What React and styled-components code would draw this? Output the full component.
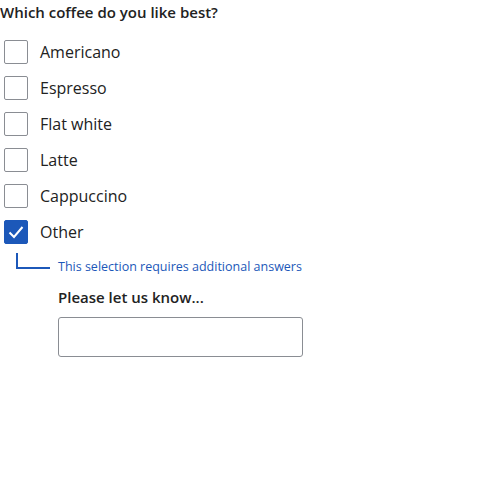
import styled, { createGlobalStyle } from "styled-components";

const Global = createGlobalStyle`
  body {
    margin: 0;
    background: #fff;
    font-family: "Open Sans", "Noto Sans", sans-serif;
    color: #1d1d1f;
  }
`;

const Group = styled.div`
  display: flex;
  flex-direction: column;
`;

const Question = styled.div`
  margin-top: 2px;
  font-size: 15px;
  font-weight: 600;
  line-height: 20px;
  color: #222;
`;

const List = styled.div`
  display: flex;
  flex-direction: column;
  gap: 12px;
  margin-top: 18px;
  padding-left: 4px;
`;

const Row = styled.label`
  display: flex;
  align-items: center;
  gap: 12px;
  height: 24px;
  font-size: 16px;
  color: #222;
  cursor: pointer;
`;

const Box = styled.span`
  width: 24px;
  height: 24px;
  box-sizing: border-box;
  border-radius: 2px;
  border: 1px solid ${(p) => (p.checked ? "#1c58b9" : "#8a8d93")};
  background: ${(p) => (p.checked ? "#1c58b9" : "#fff")};
  display: flex;
  align-items: center;
  justify-content: center;
`;

const Follow = styled.div`
  display: flex;
  flex-direction: column;
  padding-left: 58px;
  position: relative;
`;

const Connector = styled.span`
  position: absolute;
  left: 16px;
  top: 9px;
  width: 34px;
  height: 16px;
  border-left: 2px solid #1c58b9;
  border-bottom: 2px solid #1c58b9;
  box-sizing: border-box;
`;

const Hint = styled.div`
  margin-top: 15px;
  font-size: 12.5px;
  line-height: 16px;
  color: #1c58b9;
`;

const SubLabel = styled.div`
  margin-top: 12px;
  font-size: 15px;
  font-weight: 600;
  line-height: 20px;
  color: #222;
`;

const Input = styled.input`
  margin-top: 10px;
  width: 245px;
  height: 40px;
  box-sizing: border-box;
  border: 1px solid #8a8d93;
  border-radius: 3px;
  font: inherit;
  padding: 0 8px;
`;

const options = ["Americano", "Espresso", "Flat white", "Latte", "Cappuccino", "Other"];

const Check = () => (
  <svg width="18" height="18" viewBox="0 0 18 18">
    <path d="M2.5 9.5 L7 14 L15.5 4" fill="none" stroke="#fff" strokeWidth="2" />
  </svg>
);

export default function App() {
  return (
    <>
      <Global />
      <Group role="group">
        <Question>Which coffee do you like best?</Question>
        <List>
          {options.map((o) => {
            const checked = o === "Other";
            return (
              <Row key={o}>
                <Box checked={checked}>{checked && <Check />}</Box>
                {o}
              </Row>
            );
          })}
        </List>
        <Follow>
          <Connector />
          <Hint>This selection requires additional answers</Hint>
          <SubLabel>Please let us know...</SubLabel>
          <Input type="text" />
        </Follow>
      </Group>
    </>
  );
}
